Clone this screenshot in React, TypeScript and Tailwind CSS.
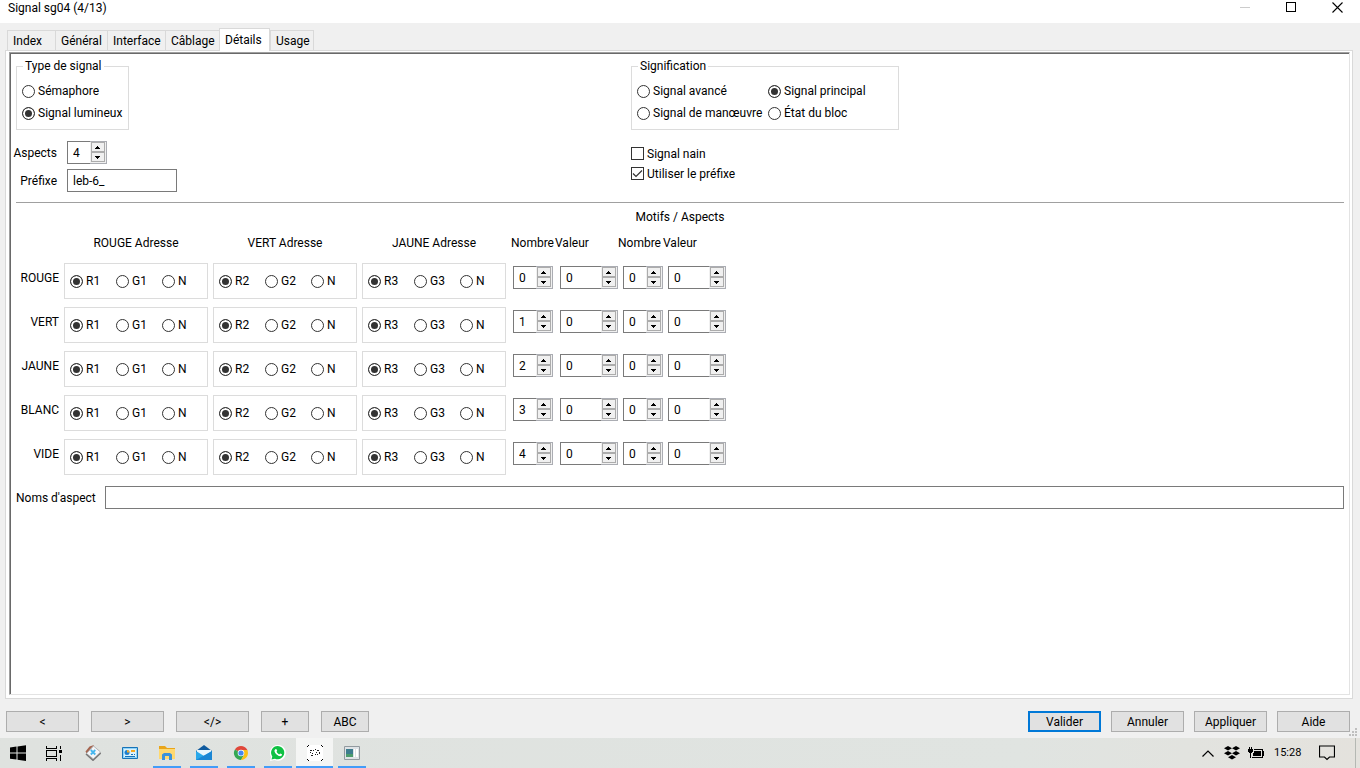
import { useState, type ReactNode } from 'react';
import clsx from 'clsx';

const TABS = [
  { label: 'Index', width: 'w-[48px]' },
  { label: 'Général', width: 'w-[52px]' },
  { label: 'Interface', width: 'w-[58px]' },
  { label: 'Câblage', width: 'w-[54px]' },
  { label: 'Détails', width: 'w-[51px]' },
  { label: 'Usage', width: 'w-[44px]' },
];

const COLORS = ['ROUGE', 'VERT', 'JAUNE', 'BLANC', 'VIDE'];
const ADDRESSES = ['ROUGE', 'VERT', 'JAUNE'];

function Radio({ name, label, checked }: { name: string; label: string; checked?: boolean }) {
  return (
    <label className="flex h-[22px] items-center gap-[3px] whitespace-nowrap">
      <input
        type="radio"
        name={name}
        defaultChecked={checked}
        className="size-[13px] shrink-0 appearance-none rounded-full border border-[#333] bg-white checked:bg-[#333] checked:shadow-[inset_0_0_0_2px_white]"
      />
      {label}
    </label>
  );
}

function Checkbox({ label, checked }: { label: string; checked?: boolean }) {
  return (
    <label className="flex h-5 items-center gap-[3px]">
      <span className="mb-px grid size-[13px] shrink-0">
        <input
          type="checkbox"
          defaultChecked={checked}
          className="peer col-start-1 row-start-1 size-[13px] appearance-none border border-[#333] bg-white"
        />
        <svg
          viewBox="0 0 13 13"
          className="pointer-events-none invisible col-start-1 row-start-1 size-[13px] peer-checked:visible"
        >
          <path d="M2 6.5l3 3 6-6" fill="none" stroke="#333" strokeWidth="1.2" />
        </svg>
      </span>
      {label}
    </label>
  );
}

function Spin({ id, label, value, className }: { id?: string; label: string; value: number; className: string }) {
  const [current, setCurrent] = useState(String(value));
  const step = (by: number) => setCurrent(String(Math.max(0, Number(current) + by)));
  const arrow = 'flex h-[10px] w-[14px] items-center justify-center border border-[#acacac] bg-[#f0f0f0] pr-px';

  return (
    <span className={clsx('flex h-[23px]', className)}>
      <input
        id={id}
        aria-label={label}
        value={current}
        onChange={(e) => setCurrent(e.target.value)}
        className="w-full min-w-0 flex-1 border border-r-0 border-[#7a7a7a] bg-white pl-[5px] outline-none"
      />
      <span className="flex w-[17px] shrink-0 flex-col border border-l-0 border-[#abadb3] bg-[#f0f0f0] pl-px">
        <button type="button" aria-label={`${label} +`} onClick={() => step(1)} className={arrow}>
          <svg width="5" height="3" viewBox="0 0 5 3" shapeRendering="crispEdges">
            <path d="M2 0h1v1h1v1h1v1H0V2h1V1h1z" />
          </svg>
        </button>
        <button type="button" aria-label={`${label} -`} onClick={() => step(-1)} className={arrow}>
          <svg width="5" height="3" viewBox="0 0 5 3" shapeRendering="crispEdges">
            <path d="M0 0h5v1H4v1H3v1H2V2H1V1H0z" />
          </svg>
        </button>
      </span>
    </span>
  );
}

function Group({ title, className, children }: { title: string; className: string; children: ReactNode }) {
  return (
    <fieldset className={clsx('border border-[#dcdcdc] px-[5px] pb-[5px]', className)}>
      <legend className="ml-[1px] px-[2px] leading-[15px]">{title}</legend>
      <div className="pt-[6px]">{children}</div>
    </fieldset>
  );
}

function TitleBar() {
  return (
    <header className="flex h-[23px] items-start justify-between bg-white pl-2">
      <h1 className="leading-4">Signal sg04 (4/13)</h1>
      <div className="flex">
        <button type="button" aria-label="Réduire" className="flex h-[15px] w-[46px] items-center justify-center">
          <svg width="11" height="11" shapeRendering="crispEdges">
            <path d="M0 5h10v1H0z" fill="#ccc" />
          </svg>
        </button>
        <button type="button" aria-label="Agrandir" className="flex h-[15px] w-[46px] items-center justify-center">
          <svg width="11" height="11" shapeRendering="crispEdges">
            <path d="M.5.5h9v9h-9z" fill="none" stroke="#000" />
          </svg>
        </button>
        <button type="button" aria-label="Fermer" className="flex h-[15px] w-[46px] items-center justify-center">
          <svg width="11" height="11">
            <path d="M.5.5l10 10M10.5.5l-10 10" stroke="#000" strokeWidth="1.1" />
          </svg>
        </button>
      </div>
    </header>
  );
}

function Tabs() {
  const [active, setActive] = useState('Détails');
  return (
    <div role="tablist" className="flex h-[22px] items-end pl-[2px]">
      {TABS.map(({ label, width }) => (
        <button
          key={label}
          type="button"
          role="tab"
          aria-selected={active === label}
          onClick={() => setActive(label)}
          className={clsx(
            'shrink-0 border-t border-[#d9d9d9] pl-[5px] text-left whitespace-nowrap',
            width,
            active === label ? 'z-10 -mb-px h-[23px] border-x bg-white' : 'h-5 border-l bg-[#f0f0f0] last:border-r',
          )}
        >
          {label}
        </button>
      ))}
    </div>
  );
}

function AspectTable() {
  return (
    <table className="mt-[6px] w-[710px] table-fixed border-collapse">
      <colgroup>
        <col className="w-[48px]" />
        <col className="w-[149px]" />
        <col className="w-[149px]" />
        <col className="w-[149px]" />
        <col className="w-[44px]" />
        <col className="w-[63px]" />
        <col className="w-[45px]" />
        <col className="w-[63px]" />
      </colgroup>
      <thead>
        <tr className="h-[30px] align-top leading-5 whitespace-nowrap">
          <td className="p-0" />
          {ADDRESSES.map((name) => (
            <th key={name} className="p-0 pr-[5px] text-center font-normal">
              {name} Adresse
            </th>
          ))}
          <th className="p-0 text-left font-normal">Nombre</th>
          <th className="p-0 text-left font-normal">Valeur</th>
          <th className="p-0 text-left font-normal">Nombre</th>
          <th className="p-0 text-left font-normal">Valeur</th>
        </tr>
      </thead>
      <tbody>
        {COLORS.map((color, row) => (
          <tr key={color} className="h-11 align-top">
            <th className="p-0 pr-[5px] text-right leading-[30px] font-normal">{color}</th>
            {ADDRESSES.map((address, i) => (
              <td key={address} className="p-0 pr-[5px]">
                <div className="grid h-9 grid-cols-[46px_46px_1fr] items-center border border-[#dcdcdc] pl-[5px]">
                  <Radio name={`${color}-${address}`} label={`R${i + 1}`} checked />
                  <Radio name={`${color}-${address}`} label={`G${i + 1}`} />
                  <Radio name={`${color}-${address}`} label="N" />
                </div>
              </td>
            ))}
            <td className="p-0 pt-[3px] pl-[2px]">
              <Spin label={`${color} nombre 1`} value={row} className="w-[40px]" />
            </td>
            <td className="p-0 pt-[3px] pl-[5px]">
              <Spin label={`${color} valeur 1`} value={0} className="w-[58px]" />
            </td>
            <td className="p-0 pt-[3px] pl-[5px]">
              <Spin label={`${color} nombre 2`} value={0} className="w-[40px]" />
            </td>
            <td className="p-0 pt-[3px] pl-[5px]">
              <Spin label={`${color} valeur 2`} value={0} className="w-[58px]" />
            </td>
          </tr>
        ))}
      </tbody>
    </table>
  );
}

function DetailsPanel() {
  return (
    <main className="flex flex-1 flex-col border border-[#d9d9d9] bg-white pt-px pr-[2px] pb-[3px] pl-[3px]">
      <div className="flex flex-1 flex-col border border-[#e3e3e3] border-t-[#a0a0a0] border-l-[#a0a0a0]">
        <div className="flex-1 border-t border-l border-[#696969] p-[5px]">
          <div className="grid grid-cols-[615fr_713fr]">
            <div>
              <Group title="Type de signal" className="w-[113px] min-w-0">
                <Radio name="type" label="Sémaphore" />
                <Radio name="type" label="Signal lumineux" checked />
              </Group>
              <div className="mt-[11px] grid grid-cols-[41px_110px] items-center gap-x-[10px] gap-y-[5px]">
                <label htmlFor="aspects" className="justify-self-end">
                  Aspects
                </label>
                <Spin id="aspects" label="Aspects" value={4} className="w-[40px]" />
                <label htmlFor="prefix" className="justify-self-end">
                  Préfixe
                </label>
                <input
                  id="prefix"
                  defaultValue="leb-6_"
                  className="h-[23px] border border-[#7a7a7a] bg-white pl-[5px] outline-none"
                />
              </div>
            </div>
            <div>
              <Group title="Signification" className="w-[268px]">
                <div className="grid grid-cols-[131px_1fr]">
                  <Radio name="meaning" label="Signal avancé" />
                  <Radio name="meaning" label="Signal principal" checked />
                  <Radio name="meaning" label="Signal de manœuvre" />
                  <Radio name="meaning" label="État du bloc" />
                </div>
              </Group>
              <div className="mt-[14px]">
                <Checkbox label="Signal nain" />
                <Checkbox label="Utiliser le préfixe" checked />
              </div>
            </div>
          </div>

          <hr className="mt-[10px] border-t border-[#a0a0a0]" />
          <h2 className="mt-1 text-center leading-5">Motifs / Aspects</h2>
          <AspectTable />

          <div className="mt-[3px] flex items-center">
            <label htmlFor="names" className="w-[89px] shrink-0 whitespace-nowrap">
              Noms d'aspect
            </label>
            <input id="names" className="h-[23px] min-w-0 flex-1 border border-[#7a7a7a] bg-white px-[5px] outline-none" />
          </div>
        </div>
      </div>
    </main>
  );
}

function DialogButton({ children, small, primary }: { children: ReactNode; small?: boolean; primary?: boolean }) {
  return (
    <button
      type="button"
      className={clsx(
        'flex h-[21px] items-center justify-center bg-[#e1e1e1]',
        small ? 'w-[48px]' : 'w-[73px]',
        primary ? 'border-2 border-[#0078d7]' : 'border border-[#adadad]',
      )}
    >
      {children}
    </button>
  );
}

function Footer() {
  return (
    <footer className="relative flex justify-between pt-3 pr-[10px] pb-[6px] pl-[6px]">
      <div className="flex gap-3">
        <DialogButton>&lt;</DialogButton>
        <DialogButton>&gt;</DialogButton>
        <DialogButton>&lt;/&gt;</DialogButton>
        <DialogButton small>+</DialogButton>
        <DialogButton small>ABC</DialogButton>
      </div>
      <div className="flex gap-[10px]">
        <DialogButton primary>Valider</DialogButton>
        <DialogButton>Annuler</DialogButton>
        <DialogButton>Appliquer</DialogButton>
        <DialogButton>Aide</DialogButton>
      </div>
      {/* resize grip */}
      <svg width="8" height="8" className="absolute right-[3px] bottom-[2px]" shapeRendering="crispEdges">
        <path d="M6 0h2v2H6zM3 3h2v2H3zM6 3h2v2H6zM0 6h2v2H0zM3 6h2v2H3zM6 6h2v2H6z" fill="#bfbfbf" />
      </svg>
    </footer>
  );
}

const APPS: { name: string; running?: boolean; active?: boolean; icon: ReactNode }[] = [
  {
    name: 'Scanner',
    icon: (
      <>
        <path d="M.5 6.500L4.500 1.500 9 0 6 6 2 9z" fill="#a5644e" />
        <path d="M8.500 1L15.500 7 8.500 14 1.500 8.500z" fill="#f4f5f7" stroke="#b4b6b8" />
        <path d="M1 9l7 6.300L15.800 8" fill="none" stroke="#777" strokeWidth="1.500" />
        <path d="M5.800 5l4.500 4.500M10.300 5L5.800 9.500" stroke="#45b6ee" strokeWidth="1.800" />
      </>
    ),
  },
  {
    name: 'Panneau',
    icon: (
      <>
        <path d="M.5 2.500h15v11H.5z" fill="#8fd3f7" stroke="#1773b8" />
        <path d="M2 4h12v8H2z" fill="#d9f1fd" />
        <circle cx="5" cy="7.500" r="2.500" fill="#1b7fd0" />
        <path d="M5 7.500V5a2.500 2.500 0 012.500 2.500z" fill="#f6a821" />
        <path d="M9 5h4v2H9z" fill="#f6a821" />
        <path d="M9 9h2v1H9zM12 9h1v1h-1zM3 11h10v1H3z" fill="#1773b8" />
      </>
    ),
  },
  {
    name: 'Explorateur',
    running: true,
    icon: (
      <>
        <path d="M0 1h6l2 2h8v11H0z" fill="#e9a51b" />
        <path d="M0 4h16v10H0z" fill="#ffd970" />
        <path d="M3 15V9.500L5 8h6l2 1.500V15h-3v-4H6v4z" fill="#3a92dc" />
      </>
    ),
  },
  {
    name: 'Courrier',
    running: true,
    icon: (
      <>
        <path d="M0 6l8-6 8 6v9H0z" fill="#0f5a9e" />
        <path d="M1 5h14v3l-7 5-7-5z" fill="#eaf6fd" />
        <path d="M0 6l8 5 8-5v9H0z" fill="#29a8ea" />
        <path d="M0 15l16-9v9z" fill="#1b86d4" />
      </>
    ),
  },
  {
    name: 'Chrome',
    running: true,
    icon: (
      <>
        <path d="M8 8L1.900 4.500A7 7 0 0114.100 4.500L14.500 5.500H8z" fill="#e0473a" />
        <path d="M8 8L1.900 4.500A7 7 0 008 15l3-5z" fill="#35a753" />
        <path d="M8 5h6.300A7 7 0 018 15l3-5z" fill="#fbc116" />
        <circle cx="8" cy="8" r="3.300" fill="#fff" />
        <circle cx="8" cy="8" r="2.600" fill="#4587f0" />
      </>
    ),
  },
  {
    name: 'WhatsApp',
    running: true,
    icon: (
      <>
        <path d="M0 16l1.100-4A8 8 0 114.500 15z" fill="#fff" />
        <path d="M1.500 14.500l.8-3A6.600 6.600 0 115 13.700z" fill="#0fc143" />
        <path
          d="M5.300 4.200l1-.3.9 1.900-.7 1c.6 1.200 1.500 2 2.700 2.600l.9-1 1.900.9c.1 1.300-.8 2-1.800 2C7.700 11 5 8.400 4.500 6.300c-.1-.8.100-1.600.8-2.100z"
          fill="#fff"
        />
      </>
    ),
  },
  {
    name: 'Rocrail',
    running: true,
    active: true,
    icon: (
      <>
        <rect width="16" height="16" fill="#fff" />
        <path
          d="M1 0h1v1H1v1H0V1h1zM14 0h1v1h1v1h-1V1h-1zM0 14h1v1h1v1H1v-1H0zM15 14h1v1h-1v1h-1v-1h1z"
          fill="#000"
          shapeRendering="crispEdges"
        />
        <path
          d="M3 5h2v1H3zM6 5h1v1H6zM8 4h1v1H8zM10 5h2v1h-2zM3 7h1v1H3zM5 8h1v1H5zM9 7h1v1H9zM12 7h1v2h-1zM4 10h2v1H4zM8 9h1v1H8zM10 9h1v1h-1z"
          fill="#222"
          shapeRendering="crispEdges"
        />
      </>
    ),
  },
  {
    name: 'Fenêtre',
    running: true,
    icon: (
      <>
        <path d="M.5 1.500h15v13H.5z" fill="#dfe3e6" stroke="#929a9f" />
        <path d="M2 4h7v8H2z" fill="#3e7d8e" />
        <path d="M2 9h7v3H2z" fill="#4c9b6c" />
        <path d="M10 4h1v8h-1zM12 4h2v8h-2z" fill="#fff" />
      </>
    ),
  },
];

function Taskbar() {
  return (
    <nav className="flex h-[30px] items-stretch justify-between bg-linear-to-r from-[#dfe2df] via-[#e0e4e1] via-75% to-[#e4e2dd]">
      <div className="flex">
        <button type="button" aria-label="Démarrer" className="flex w-9 items-center justify-center">
          <svg width="16" height="16">
            <path d="M0 2.500L6.500 1.600v6H0zM7.500 1.400L16 .2v7.400H7.500zM0 8.600h6.500v6L0 13.700zM7.500 8.600H16V16l-8.500-1.200z" />
          </svg>
        </button>
        <button type="button" aria-label="Vue des tâches" className="flex w-[38px] items-center justify-center pr-1">
          <svg width="17" height="16" shapeRendering="crispEdges" className="fill-black">
            <path
              d="M1 1h1v2h9V1h1v3H1zM1 5h11v7H1zM2 6v5h9V6zM1 13h11v3h-1v-2H2v2H1zM15 1h1v3h-1zM14 5h3v3h-3zM15 10h1v6h-1z"
              fillRule="evenodd"
            />
          </svg>
        </button>
        {APPS.map(({ name, running, active, icon }) => (
          <button
            key={name}
            type="button"
            aria-label={name}
            className={clsx('flex w-[37px] flex-col items-center', active && 'bg-[#f4f5f4]')}
          >
            <svg width="16" height="16" className="mt-[7px] mb-[5px]">
              {icon}
            </svg>
            {running && <span className={clsx('h-[2px] bg-[#429cf8]', active ? 'w-full' : 'w-7')} />}
          </button>
        ))}
      </div>

      <div className="flex items-center">
        <svg width="12" height="7" className="mr-[10px]">
          <path d="M.5 6.500L6 1l5.500 5.500" fill="none" stroke="#000" strokeWidth="1.200" />
        </svg>
        <svg width="16" height="14" className="mr-2">
          <path d="M4 0l4 2.300L4 4.600 0 2.300zM12 0l4 2.300-4 2.300-4-2.300zM4 5l4 2.300L4 9.600 0 7.300zM12 5l4 2.300-4 2.300-4-2.300zM8 9l4 2.300L8 13.600l-4-2.300z" />
        </svg>
        <svg width="16" height="12" className="mr-[10px]" shapeRendering="crispEdges">
          <path d="M1 0h1v2h1V0h1v2h1v3H4v1H3v5H2V6H1V5H0V2h1zM6 2h9v2h1v5h-1v2H4v-1h10V3H6zM6 4h7v5H5V6h1z" />
        </svg>
        <time className="w-[27px] text-[11px] whitespace-nowrap">15:28</time>
        <button type="button" aria-label="Notifications" className="mr-5 ml-[18px]">
          <svg width="16" height="16" fill="none" stroke="#000">
            <path d="M.5 1h15v11h-5L8 14.500 5.500 12h-5z" strokeWidth="1.200" />
          </svg>
        </button>
        <span className="mr-1 h-full w-px bg-[#b5b8b3]" />
      </div>
    </nav>
  );
}

export default function App() {
  return (
    <div className="flex min-h-screen flex-col bg-[#f0f0f0] font-[Roboto,'Open_Sans',sans-serif] text-[12px] leading-4 text-black">
      <TitleBar />
      <div className="flex flex-1 flex-col pt-[5px] pr-[7px] pl-[5px]">
        <Tabs />
        <DetailsPanel />
      </div>
      <Footer />
      <Taskbar />
    </div>
  );
}
